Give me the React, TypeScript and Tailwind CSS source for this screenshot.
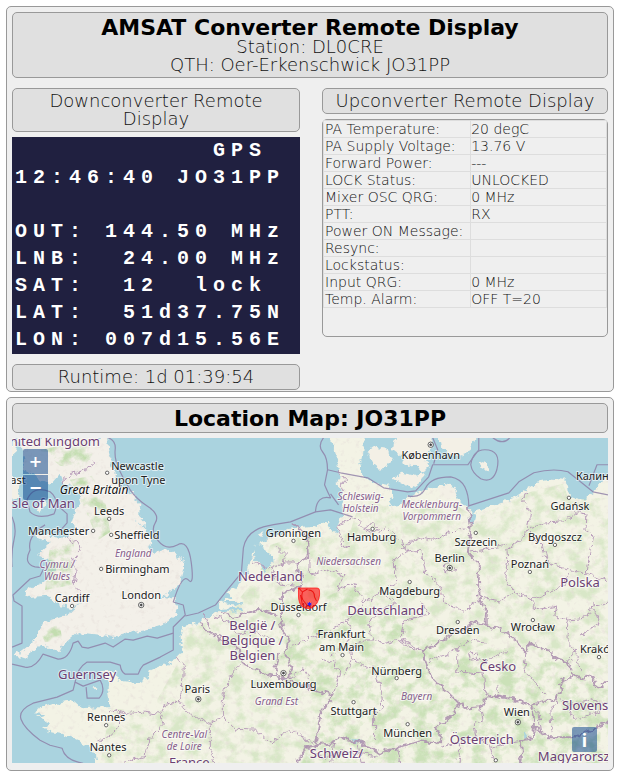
import React from 'react';

const lcdLines = [
  '           GPS',
  '12:46:40 JO31PP',
  '',
  'OUT: 144.50 MHz',
  'LNB:  24.00 MHz',
  'SAT:  12  lock',
  'LAT:  51d37.75N',
  'LON: 007d15.56E',
];

const readings: [string, string][] = [
  ['PA Temperature:', '20 degC'],
  ['PA Supply Voltage:', '13.76 V'],
  ['Forward Power:', '---'],
  ['LOCK Status:', 'UNLOCKED'],
  ['Mixer OSC QRG:', '0 MHz'],
  ['PTT:', 'RX'],
  ['Power ON Message:', ''],
  ['Resync:', ''],
  ['Lockstatus:', ''],
  ['Input QRG:', '0 MHz'],
  ['Temp. Alarm:', 'OFF T=20'],
];

const britain =
  'M18 438H107L108 450L113 468L118 482L125 490L133 495L140 505L139 513L146 526L141 525L133 517L144 529L152 540L148 549L157 551L170 550L180 557L183 567L180 583L170 592L160 598L175 597L177 609L173 617L163 625L147 630L127 633L115 637L100 635L78 632L72 637L63 645L60 652L50 648L40 645L27 655L26 660L14 656L23 650L33 642L40 630L43 623L55 618L70 613L80 604L72 608L60 606L52 599L45 596L28 597L25 592L33 587L45 582L57 567L53 560L40 557L37 555L50 543L35 537L38 532L50 537L67 538L75 530L72 520L75 513L80 503L78 493L70 487L63 482L60 474L50 485L40 480L32 474L22 470L24 455Z';

const continent =
  'M97 775L95 755L88 747L78 740L67 735L53 732L43 727L50 722L38 717L47 714L35 713L38 708L53 703L73 700L82 708L97 707L110 707L108 693L109 683L100 670L115 670L117 680L137 683L147 678L150 670L167 663L177 657L182 652L180 633L183 627L200 622L212 614L222 610L218 602L232 598L226 592L237 587L247 573L252 553L255 545L264 541L267 538L287 530L310 527L327 522L332 532L338 533L338 523L343 515L340 507L343 497L338 487L340 477L338 463L333 450L328 430H363L363 450L362 460L357 467L363 477L373 483L387 486L392 497L388 507L400 505L408 497L425 490L440 487L450 485L455 497L463 505L472 512L480 510L513 498L525 490L537 482L553 479L563 480L567 485L568 497L583 500L592 493L603 480L620 476V775Z';

const islands = [
  'M367 452L374 447L387 449L391 459L386 468L379 470L370 463Z',
  'M396 430H433L430 452L425 462L428 468L421 472L415 464L403 466L400 456L392 450Z',
  'M391 478L401 473L415 476L425 472L421 482L412 488L402 484Z',
  'M437 430H478L470 450L460 457L448 453L440 447Z',
  'M478 462L488 465L488 472L480 468Z',
  'M437 492L444 484L454 488L456 496L446 499Z',
  'M5 430H17L15 456L5 459Z',
  'M5 474L20 480L18 498L5 500Z',
  'M36 510L43 500L46 504L40 512Z',
  'M227 606L240 604L238 609L225 611Z',
  'M258 535L265 531L262 537Z',
  'M93 686H98V688H93Z',
  'M336 482L339 480L339 486Z',
];

const lakes = [
  'M253 546L260 543L264 550L272 556L272 563L263 572L260 564L254 558Z',
  'M221 601L239 601L243 605L230 604Z',
  'M218 609L240 608L242 611L224 612Z',
  'M469 512L476 514L474 522L470 524L468 518Z',
  'M349 737L357 740L362 744L355 743Z',
  'M525 731L527 735L525 739L523 737Z',
  'M368 452L366 466L362 474L369 478L372 470Z',
];

const seaBorders = [
  'M108 438Q116 441 115 450T119 470T130 490T148 507T155 523T158 541T177 545T191 563T188 580T173 602L183 605L185 615L173 627V650L160 657L143 665Q140 668 138 674H125Q121 672 120 665L110 662H87Q77 668 75 682L83 686L100 680Q106 690 99 698H87L86 687',
  'M173 633L157 638L147 636L133 640L125 639L113 647L105 643L88 648L82 647L78 641L73 643Q69 659 58 659L43 654Q35 669 25 667L12 664',
  'M75 682L73 690L57 697L33 703Q18 710 21 719T40 740L50 745L62 748Q65 760 83 763',
  'M12 517Q17 528 14 540T12 567',
  'M45 525Q27 536 30 550Q23 564 35 567L44 568L40 576L30 579L13 595L14 601L22 606V643L12 647',
  'M27 500Q33 485 50 492Q60 500 54 514Q38 520 30 512Z',
  'M58 506L67 514L67 523L58 533',
  'M323 438Q317 446 322 452T327 470L324 485Q327 492 330 498Q316 495 315 512L290 522Q270 525 263 527Q246 532 243 548L241 573L227 590L215 605L198 613L185 616',
  'M327 470L340 473L367 478L383 488L407 492L415 491L428 477L432 465L467 465L478 450V438',
  'M330 494L338 505M315 512L330 510L352 517',
  'M407 496Q420 499 425 488T450 477Q460 479 464 487T468 506L508 493L518 482L533 473Q552 468 567 472L592 492L607 495',
  'M470 465Q472 450 484 450Q501 450 496 470Q492 484 480 479Q471 473 470 465Z',
  'M588 486L596 465H607M492 438Q502 446 509 438M432 438L437 450L433 464',
];

const countryBorders = [
  'M290 523L300 530L308 537L307 557L297 563L298 572L303 573L300 587L284 592L281 600L283 607L280 620L283 630L288 636L285 655L292 667L287 678L280 678L275 667L280 653',
  'M200 622L205 630L217 637L228 642L240 650L242 663L263 673L280 678L310 688L332 695L320 713L317 733L315 745L305 747L300 757L297 763',
  'M220 612L233 617L240 615L257 610L266 612L277 615',
  'M315 745L333 743L340 737L357 742L373 747L377 753L397 747L420 740L440 743L441 737L435 727L450 717L458 703L447 692L440 687L433 680L428 672L422 650L443 640L455 632L467 628L470 622L486 625L500 630L513 638L518 646L525 653L530 643L547 650L555 658L567 662L573 675L562 680L557 697L545 701L530 705L517 700L500 697L487 695L480 707L467 708L458 703',
  'M468 507L470 527L467 553L478 563V577L479 600L486 612V625',
  'M573 675L580 679L590 675L595 687L600 688L602 682L612 682',
  'M530 705L533 715L533 727L547 737L573 737L590 730L612 720',
  'M533 727L532 738L520 740L521 749L518 770',
];

const stateBorders = [
  'M94 462L82 472L72 474L62 482',
  'M67 537L78 544L80 552L73 561L76 570L74 585L80 592L82 603',
  'M203 613L209 628M177 657L183 665L182 690L178 700L165 705L160 714L144 712L130 713L110 710M160 714L163 724L150 738L145 756L120 763M110 710L120 714L119 728L110 736L97 742',
  'M178 700L188 713L210 724L222 716L222 700L227 682L238 665M210 724L210 748L214 763M222 716L235 729L256 730L270 742L290 730L305 738L315 745',
  'M214 616L230 622L238 634L252 630L270 638M250 560L268 568L286 562L300 562M270 568L278 584L300 587M275 545L285 555L282 565',
  'M308 538L310 575L330 570L344 576L336 590L352 584L365 602L350 618L330 630L310 637L290 647',
  'M353 518L363 527L378 533L385 527M353 518L338 526L342 544L348 548L341 545',
  'M338 473L345 480L340 490M365 602L380 592L396 582L393 560L406 552L401 540L388 530',
  'M400 548L420 537L435 540L455 530L470 527M421 550L425 573L440 587L443 603L463 611L478 600M406 552L421 550',
  'M422 650L410 648L398 640L385 643L372 640L368 624L378 610L395 603L380 592',
  'M287 678L305 670L310 680M322 658L334 662L339 674L332 695M344 676L351 659L366 668L372 666L381 692L382 706L374 712L374 740',
  'M330 656L345 646L350 635L347 618M351 659L350 648L365 640L372 640',
  'M422 650L400 640L405 620L428 614L420 600M428 661L450 653L470 640L486 642M457 655L457 672L483 674L484 692L498 697M483 662L495 656L505 650M498 697L497 686',
  'M526 491L522 500L530 511L528 527L520 540L506 549L507 560L504 578L514 592L530 599L547 593L563 585L568 572M467 553L490 548L506 545M530 528L545 523L562 522L576 512L585 514L584 530L593 536L588 560L586 573L562 568L546 562L541 545L528 532',
  'M586 573L607 582M478 597L500 601L513 593M530 599L535 610L556 606L553 616L567 620L566 640L575 650L567 662M567 620L585 618L592 606L607 603M575 650L580 673M592 606L598 623L580 635',
  'M525 653L523 668L530 678L545 695M530 705L537 712L541 733M551 732L550 710L557 697L567 705L573 720L590 714L607 708M567 705L590 700L607 702',
  'M480 707L482 720L473 722L475 735L460 742L440 747M475 735L490 747L510 742L520 740M460 742L457 763M490 747L493 763M397 747L400 763M333 743L330 763M357 742L362 763M305 747L325 757L345 750L377 757',
  'M468 654L476 653L478 659L470 660Z',
  'M442 566L448 563L455 567L454 571L445 572Z',
  'M363 529L372 523L378 530L370 532Z',
];

type Label = { t: string; x: number; y: number; k: 'c' | 'n' | 'r' | 'g'; a?: 'start' };

const labels: Label[] = [
  { t: 'United Kingdom', x: 50, y: 446, k: 'n' },
  { t: 'Isle of Man', x: 41, y: 508, k: 'n' },
  { t: 'Belfast', x: 8, y: 484, k: 'c' },
  { t: 'Great Britain', x: 94, y: 494, k: 'g' },
  { t: 'Newcastle', x: 111, y: 470, k: 'c', a: 'start' },
  { t: 'upon Tyne', x: 111, y: 484, k: 'c', a: 'start' },
  { t: 'Leeds', x: 109, y: 515, k: 'c' },
  { t: 'Manchester', x: 28, y: 535, k: 'c', a: 'start' },
  { t: 'Sheffield', x: 114, y: 539, k: 'c', a: 'start' },
  { t: 'England', x: 133, y: 557, k: 'r' },
  { t: 'Cymru /', x: 57, y: 568, k: 'r' },
  { t: 'Wales', x: 57, y: 580, k: 'r' },
  { t: 'Birmingham', x: 105, y: 573, k: 'c', a: 'start' },
  { t: 'Cardiff', x: 72, y: 602, k: 'c' },
  { t: 'London', x: 141, y: 599, k: 'c' },
  { t: 'Guernsey', x: 87, y: 679, k: 'n' },
  { t: 'Rennes', x: 106, y: 721, k: 'c' },
  { t: 'Nantes', x: 108, y: 751, k: 'c' },
  { t: 'Paris', x: 197, y: 693, k: 'c' },
  { t: 'Centre-Val', x: 184, y: 738, k: 'r' },
  { t: 'de Loire', x: 184, y: 750, k: 'r' },
  { t: 'France', x: 189, y: 767, k: 'n' },
  { t: 'Groningen', x: 293, y: 537, k: 'c' },
  { t: 'Hamburg', x: 371, y: 541, k: 'c' },
  { t: 'Schleswig-', x: 360, y: 500, k: 'r' },
  { t: 'Holstein', x: 360, y: 512, k: 'r' },
  { t: 'Niedersachsen', x: 348, y: 565, k: 'r' },
  { t: 'Nederland', x: 270, y: 581, k: 'n' },
  { t: 'Magdeburg', x: 409, y: 595, k: 'c' },
  { t: 'Düsseldorf', x: 298, y: 611, k: 'c' },
  { t: 'Deutschland', x: 385, y: 615, k: 'n' },
  { t: 'België /', x: 252, y: 630, k: 'n' },
  { t: 'Belgique /', x: 252, y: 645, k: 'n' },
  { t: 'Belgien', x: 252, y: 660, k: 'n' },
  { t: 'Frankfurt', x: 341, y: 638, k: 'c' },
  { t: 'am Main', x: 341, y: 651, k: 'c' },
  { t: 'Luxembourg', x: 283, y: 688, k: 'c' },
  { t: 'Grand Est', x: 276, y: 705, k: 'r' },
  { t: 'Nürnberg', x: 396, y: 675, k: 'c' },
  { t: 'Stuttgart', x: 353, y: 715, k: 'c' },
  { t: 'Bayern', x: 416, y: 700, k: 'r' },
  { t: 'München', x: 407, y: 737, k: 'c' },
  { t: 'Schweiz/', x: 336, y: 758, k: 'n' },
  { t: 'København', x: 430, y: 459, k: 'c' },
  { t: 'Mecklenburg-', x: 431, y: 508, k: 'r' },
  { t: 'Vorpommern', x: 431, y: 520, k: 'r' },
  { t: 'Szczecin', x: 475, y: 546, k: 'c' },
  { t: 'Berlin', x: 449, y: 562, k: 'c' },
  { t: 'Gdańsk', x: 569, y: 510, k: 'c' },
  { t: 'Калининград', x: 575, y: 480, k: 'c', a: 'start' },
  { t: 'Bydgoszcz', x: 554, y: 541, k: 'c' },
  { t: 'Poznań', x: 529, y: 568, k: 'c' },
  { t: 'Polska', x: 579, y: 587, k: 'n' },
  { t: 'Wrocław', x: 532, y: 631, k: 'c' },
  { t: 'Dresden', x: 457, y: 634, k: 'c' },
  { t: 'Kraków', x: 579, y: 653, k: 'c', a: 'start' },
  { t: 'Česko', x: 497, y: 671, k: 'n' },
  { t: 'Wien', x: 516, y: 716, k: 'c' },
  { t: 'Österreich', x: 481, y: 744, k: 'n' },
  { t: 'Slovensko', x: 561, y: 710, k: 'n', a: 'start' },
  { t: 'Magyarország', x: 537, y: 761, k: 'n', a: 'start' },
];

const labelStyles = {
  c: 'text-[11px] fill-[#222222]',
  n: 'text-[13px] fill-[#6b3f73]',
  r: 'text-[10px] italic fill-[#87608c]',
  g: 'text-[12px] italic fill-[#111111]',
};

const towns = [
  [107, 473], [109, 519], [93, 531], [111, 535], [101, 569], [72, 606], [106, 725], [109, 755],
  [293, 541], [372, 529], [409, 582], [298, 615], [342, 655], [396, 678], [353, 702], [407, 724],
  [475, 533], [568, 498], [554, 545], [529, 572], [532, 620], [457, 622], [598, 657], [495, 760],
];
const capitals = [[141, 605], [198, 699], [283, 673], [430, 445], [449, 568], [517, 722]];

const mapButton = 'flex size-[25px] items-center justify-center bg-[#003c88]/50';

function LocationMap() {
  return (
    <div className="relative mt-[5px] h-[325px] overflow-hidden bg-[#aad3df]">
      <svg
        className="block h-full w-full"
        viewBox="12 438 595 325"
        preserveAspectRatio="xMidYMid slice"
        role="img"
        aria-label="Location map"
      >
        <defs>
          <filter id="rough" filterUnits="userSpaceOnUse" x="0" y="426" width="620" height="350">
            <feTurbulence type="fractalNoise" baseFrequency="0.16" numOctaves="3" seed="4" />
            <feDisplacementMap in="SourceGraphic" scale="8" xChannelSelector="R" yChannelSelector="G" />
          </filter>
          <filter id="woods" filterUnits="userSpaceOnUse" x="0" y="426" width="620" height="350" colorInterpolationFilters="sRGB">
            <feTurbulence type="fractalNoise" baseFrequency="0.07 0.08" numOctaves="5" seed="11" />
            <feColorMatrix values="0 0 0 0 0.72  0 0 0 0 0.85  0 0 0 0 0.64  0 3.4 0 0 -1.45" />
            <feComposite in2="SourceGraphic" operator="in" />
          </filter>
          <filter id="towns" filterUnits="userSpaceOnUse" x="0" y="426" width="620" height="350" colorInterpolationFilters="sRGB">
            <feTurbulence type="fractalNoise" baseFrequency="0.2" numOctaves="3" seed="7" />
            <feColorMatrix values="0 0 0 0 0.9  0 0 0 0 0.87  0 0 0 0 0.85  4 0 0 0 -2.2" />
            <feComposite in2="SourceGraphic" operator="in" />
          </filter>
        </defs>
        <rect x="12" y="438" width="595" height="325" fill="#aad3df" />
        <g filter="url(#rough)">
          <path d={britain} fill="#f3f0e9" />
          <path d={continent} fill="#f3f3e5" />
          {islands.map((d) => (
            <path key={d} d={d} fill="#f3f0e6" />
          ))}
        </g>
        <path
          d="M110 708L150 712L182 655L184 630L225 616L258 575L270 545L310 532L350 530L360 500L385 500L390 512L455 505L475 518L530 492L562 484L568 500L607 498V763H100Z"
          filter="url(#woods)"
          opacity="0.45"
        />
        <path
          d="M270 640L300 610L360 580L385 610L430 640L470 640L530 650L607 690V763H300L330 700L300 690Z"
          filter="url(#woods)"
          opacity="0.4"
        />
        <g filter="url(#woods)" opacity="0.8">
          <path d="M40 450L80 442L95 448L85 470L60 466Z" />
          <path d="M70 480L92 476L105 500L110 532L98 540L85 510Z" />
          <path d="M50 545L74 540L72 585L45 590Z" />
          <path d="M40 632L60 624L62 640L45 642Z" />
        </g>
        <path d={britain} filter="url(#towns)" opacity="0.5" />
        <path d={continent} filter="url(#towns)" opacity="0.5" />
        <g filter="url(#rough)">
          {lakes.map((d) => (
            <path key={d} d={d} fill="#aad3df" />
          ))}
        </g>
        <g fill="none" stroke="#8d7da6" strokeWidth="1.2" opacity="0.8" strokeLinejoin="round">
          {seaBorders.map((d) => (
            <path key={d} d={d} />
          ))}
        </g>
        <g filter="url(#rough)" fill="none" strokeLinejoin="round">
          <g stroke="#b294b6" strokeWidth="0.9">
            {stateBorders.map((d) => (
              <path key={d} d={d} />
            ))}
          </g>
          <g stroke="#ab8fae" strokeWidth="1.9" opacity="0.85">
            {countryBorders.map((d) => (
              <path key={d} d={d} />
            ))}
          </g>
        </g>
        <g fill="#ffffff" stroke="#444444" strokeWidth="0.8">
          {towns.map(([x, y]) => (
            <circle key={x + '-' + y} cx={x} cy={y} r="1.7" />
          ))}
          {capitals.map(([x, y]) => (
            <g key={x + '-' + y}>
              <circle cx={x} cy={y} r="2.7" />
              <circle cx={x} cy={y} r="1" fill="#444444" />
            </g>
          ))}
        </g>
        <g
          className="font-['Noto_Sans',sans-serif] font-normal"
          stroke="#ffffff"
          strokeOpacity="0.6"
          strokeWidth="2"
          strokeLinejoin="round"
          paintOrder="stroke"
        >
          {labels.map((l) => (
            <text key={l.t} x={l.x} y={l.y} textAnchor={l.a ?? 'middle'} className={labelStyles[l.k]}>
              {l.t}
            </text>
          ))}
        </g>
        <g>
          <path
            d="M298 588H316Q319 588 319 591Q320 600 314 606Q308 611 301 606Q298 602 298 596Z"
            fill="#ff0000"
            fillOpacity="0.6"
            stroke="#ff1010"
            strokeOpacity="0.7"
            strokeWidth="1"
          />
          <path
            d="M298 588L302 592L307 589M302 592Q300 598 304 602L308 607M300 595L302 605M308 590Q314 590 314 597L316 601"
            fill="none"
            stroke="#e80000"
            strokeOpacity="0.8"
            strokeWidth="1"
          />
          <path d="M309 602V606M307 603L311 605M311 603L307 605" stroke="#2020ff" strokeWidth="0.9" />
        </g>
      </svg>
      <div className="absolute top-[11px] left-[11px] flex flex-col gap-px font-['DejaVu_Sans',sans-serif] text-base font-bold text-white">
        <button type="button" aria-label="Zoom in" className={mapButton + ' rounded-t-[2px]'}>
          +
        </button>
        <button type="button" aria-label="Zoom out" className={mapButton + ' rounded-b-[2px]'}>
          −
        </button>
      </div>
      <button
        type="button"
        aria-label="Map information"
        className={mapButton + " absolute right-[11px] bottom-[11px] rounded-[2px] font-['Noto_Sans',sans-serif] text-lg font-bold text-white"}
      >
        i
      </button>
    </div>
  );
}

const titleBox = 'rounded-[5px] border border-[#999999] bg-[#e0e0e0] py-[3px] text-center';
const boxText = 'text-lg leading-[18px]';
const headingText = 'pt-0.5 text-[22px] leading-5 font-bold text-black';

export default function App() {
  return (
    <main className="flex flex-col gap-[5px] bg-white py-1.5 pr-[7px] pl-1.5 font-['DejaVu_Sans',sans-serif] font-extralight text-[#111111]">
      <section className="rounded-[5px] border border-[#999999] bg-[#efefef] px-[5px] pt-[5px] pb-px">
        <header className={titleBox + ' ' + boxText}>
          <h1 className={headingText}>AMSAT Converter Remote Display</h1>
          <p>Station: DL0CRE</p>
          <p>QTH: Oer-Erkenschwick JO31PP</p>
        </header>
        <div className="mt-2.5 grid grid-cols-[288fr_286fr] items-start gap-[22px]">
          <div className="min-w-0">
            <h2 className={titleBox + ' px-5 ' + boxText}>Downconverter Remote Display</h2>
            <pre className="mt-[5px] overflow-hidden bg-[#202040] pb-px pl-[3px] font-['Liberation_Mono',monospace] text-xl leading-[27px] font-bold tracking-[6px] text-white">
              {lcdLines.join('\n')}
            </pre>
            <p className={titleBox + ' mt-2.5 ' + boxText}>Runtime: 1d 01:39:54</p>
          </div>
          <div className="min-w-0">
            <h2 className={titleBox + ' whitespace-nowrap ' + boxText}>Upconverter Remote Display</h2>
            <div className="mt-[5px] h-[218px] rounded-[5px] border border-[#999999]">
              <table className="w-full table-fixed border-collapse text-sm leading-4">
                <colgroup>
                  <col className="w-[52%]" />
                  <col />
                </colgroup>
                <tbody>
                  {readings.map(([name, value]) => (
                    <tr key={name} className="h-[17px]">
                      <th scope="row" className="border border-[#dddddd] p-0 pl-px text-left font-extralight whitespace-nowrap">
                        {name}
                      </th>
                      <td className="border border-[#dddddd] p-0 whitespace-nowrap">{value}</td>
                    </tr>
                  ))}
                </tbody>
              </table>
            </div>
          </div>
        </div>
      </section>
      <section className="rounded-[5px] border border-[#999999] bg-[#efefef] px-[5px] pt-[5px] pb-[7px]">
        <div className={titleBox}>
          <h2 className={headingText}>Location Map: JO31PP</h2>
        </div>
        <LocationMap />
      </section>
    </main>
  );
}
